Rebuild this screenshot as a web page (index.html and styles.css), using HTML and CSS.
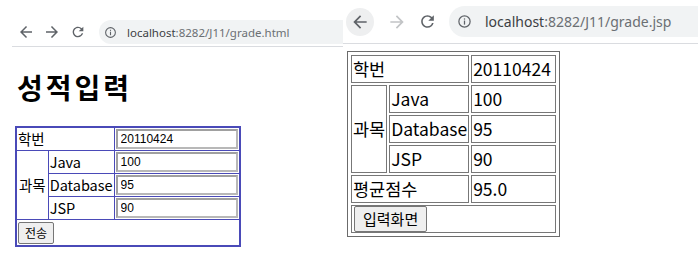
FILE: index.html
```html
<!DOCTYPE HTML>
<html>
<head>
<meta charset="utf-8">
<link rel="stylesheet" href="styles.css">
</head>
<body>
<div class="shot shot-form">
  <div class="toolbar">
    <svg class="nav back" viewBox="0 0 24 24"><path d="M20 11H7.83l5.59-5.59L12 4l-8 8 8 8 1.41-1.41L7.83 13H20v-2z"/></svg>
    <svg class="nav fwd" viewBox="0 0 24 24"><path d="M4 11h12.17l-5.59-5.59L12 4l8 8-8 8-1.41-1.41L16.17 13H4v-2z"/></svg>
    <svg class="nav reload" viewBox="0 0 24 24"><path d="M17.65 6.35A7.958 7.958 0 0012 4c-4.42 0-7.99 3.58-7.99 8s3.57 8 7.99 8c3.73 0 6.84-2.55 7.73-6h-2.08A5.99 5.99 0 0112 18c-3.31 0-6-2.69-6-6s2.69-6 6-6c1.66 0 3.14.69 4.22 1.78L13 11h7V4l-2.35 2.35z"/></svg>
    <div class="omnibox">
      <svg class="info" viewBox="0 0 24 24"><circle cx="12" cy="12" r="9" fill="none" stroke="currentColor" stroke-width="2"/><rect x="11" y="10.5" width="2" height="6.5"/><rect x="11" y="7" width="2" height="2"/></svg>
      <span class="host">localhost</span><span class="path">:8282/J11/grade.html</span>
    </div>
  </div>
  <h1 class="title">성적입력</h1>
  <form>
  <table class="form-table">
    <tr><td colspan="2">학번</td><td><input type="text" value="20110424"></td></tr>
    <tr><td rowspan="3">과목</td><td>Java</td><td><input type="text" value="100"></td></tr>
    <tr><td>Database</td><td><input type="text" value="95"></td></tr>
    <tr><td>JSP</td><td><input type="text" value="90"></td></tr>
    <tr><td colspan="3" class="btn-cell"><button type="button" class="btn">전송</button></td></tr>
  </table>
  </form>
</div>
<div class="shot shot-result">
  <div class="toolbar">
    <span class="nav-circle"><svg class="nav back" viewBox="0 0 24 24"><path d="M20 11H7.83l5.59-5.59L12 4l-8 8 8 8 1.41-1.41L7.83 13H20v-2z"/></svg></span>
    <svg class="nav fwd off" viewBox="0 0 24 24"><path d="M4 11h12.17l-5.59-5.59L12 4l8 8-8 8-1.41-1.41L16.17 13H4v-2z"/></svg>
    <svg class="nav reload" viewBox="0 0 24 24"><path d="M17.65 6.35A7.958 7.958 0 0012 4c-4.42 0-7.99 3.58-7.99 8s3.57 8 7.99 8c3.73 0 6.84-2.55 7.73-6h-2.08A5.99 5.99 0 0112 18c-3.31 0-6-2.69-6-6s2.69-6 6-6c1.66 0 3.14.69 4.22 1.78L13 11h7V4l-2.35 2.35z"/></svg>
    <div class="omnibox">
      <svg class="info" viewBox="0 0 24 24"><circle cx="12" cy="12" r="9" fill="none" stroke="currentColor" stroke-width="2"/><rect x="11" y="10.5" width="2" height="6.5"/><rect x="11" y="7" width="2" height="2"/></svg>
      <span class="host">localhost</span><span class="path">:8282/J11/grade.jsp</span>
    </div>
  </div>
  <table class="result-table">
    <tr><td colspan="2">학번</td><td>20110424</td></tr>
    <tr><td rowspan="3">과목</td><td>Java</td><td>100</td></tr>
    <tr><td>Database</td><td>95</td></tr>
    <tr><td>JSP</td><td>90</td></tr>
    <tr><td colspan="2">평균점수</td><td>95.0</td></tr>
    <tr><td colspan="3"><button type="button" class="btn btn-big">입력화면</button></td></tr>
  </table>
</div>
</body>
</html>
```

FILE: styles.css
```css
body {
  margin: 0;
  display: flex;
  background: #fff;
  font-family: "Noto Sans CJK KR", sans-serif;
  color: #000;
  overflow: hidden;
}
.shot {
  overflow: hidden;
  height: 258px;
}
.shot-form {
  width: 343px;
  flex: none;
}
.shot-result {
  flex: 1;
}

/* browser toolbar */
.toolbar {
  display: flex;
  align-items: center;
  border-bottom: 1px solid #dadce0;
}
.nav {
  fill: #5f6368;
  flex: none;
}
.nav.off {
  fill: #c2c4c6;
}
.omnibox {
  flex: 1;
  display: flex;
  align-items: center;
  background: #f1f3f4;
  white-space: nowrap;
  color: #6b6f73;
  font-family: "Noto Sans", sans-serif;
  font-weight: normal;
}
.omnibox .host {
  color: #3c4043;
}
.info {
  fill: #5f6368;
  color: #5f6368;
  flex: none;
}

.shot-form .toolbar {
  margin: 18px 0 0 12px;
  height: 28px;
}
.shot-form .nav {
  width: 18px;
  height: 18px;
}
.shot-form .back { margin: 0 0 0 5px; }
.shot-form .fwd { margin: 0 0 0 8px; }
.shot-form .reload { margin: 0 0 0 9px; width: 16px; height: 16px; }
.shot-form .omnibox {
  margin-left: 13px;
  height: 24px;
  border-radius: 12px 0 0 12px;
  font-size: 11.5px;
  padding-left: 5px;
}
.shot-form .info {
  width: 13px;
  height: 13px;
  margin-right: 10px;
}

.shot-result .toolbar {
  height: 43px;
}
.nav-circle {
  display: flex;
  align-items: center;
  justify-content: center;
  width: 28px;
  height: 28px;
  border-radius: 50%;
  background: #eeeff0;
  margin: 0 0 0 3px;
}
.shot-result .nav {
  width: 20px;
  height: 20px;
}
.shot-result .fwd { margin-left: 13px; }
.shot-result .reload { margin-left: 11px; width: 19px; height: 19px; }
.shot-result .omnibox {
  margin-left: 12px;
  height: 31px;
  border-radius: 16px 0 0 16px;
  font-size: 14px;
  padding-left: 8px;
}
.shot-result .info {
  width: 15px;
  height: 15px;
  margin-right: 13px;
}

/* input page */
.title {
  font-size: 28px;
  font-weight: bold;
  letter-spacing: 3px;
  margin: 22px 0 0 17px;
  line-height: 36px;
}
.form-table {
  border-collapse: collapse;
  border: 2px solid #4a4ab8;
  margin: 21px 0 0 15px;
  font-size: 14.5px;
}
.form-table td {
  border: 1px solid #4a4ab8;
  padding: 0 1px;
  height: 22px;
  line-height: 18px;
}
.form-table td[rowspan] {
  padding: 0 2px;
}
.form-table td:last-child {
  width: 121px;
}
.form-table input {
  box-sizing: border-box;
  width: 122px;
  height: 20px;
  border: 2px solid #b8b8b8;
  border-top-color: #a0a0a0;
  border-left-color: #a0a0a0;
  font-family: "Liberation Sans", sans-serif;
  font-size: 12px;
  padding: 0 3px;
  margin: 0;
  display: block;
}
.form-table .btn-cell {
  height: 25px;
}
.btn {
  font-family: "Noto Sans CJK KR", sans-serif;
  font-size: 12px;
  background: #efefef;
  border: 1px solid #767676;
  border-radius: 2px;
  padding: 1px 6px;
  height: 22px;
  line-height: 18px;
}

/* result page */
.result-table {
  border: 1px solid #6b6b6b;
  border-spacing: 2px;
  padding: 1px;
  margin: 7px 0 0 4px;
  font-size: 17.5px;
}
.result-table td {
  border: 1px solid #777;
  height: 26px;
  padding: 0 1px;
  line-height: 24px;
}
.result-table td:last-child {
  width: 81px;
}
.btn-big {
  font-size: 15px;
  height: 26px;
  padding: 0 8px;
  margin: 0 0 0 1px;
  display: block;
}
```
